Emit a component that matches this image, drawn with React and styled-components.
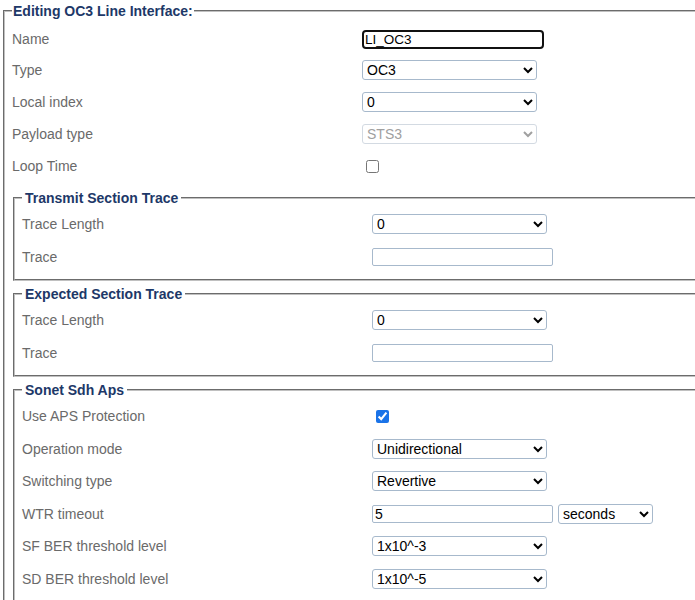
import styled, { createGlobalStyle } from "styled-components";

const GlobalStyle = createGlobalStyle`
    html, body {
        margin: 0;
        padding: 0;
        overflow: hidden;
        background: #ffffff;
    }

    body {
        font-family: "Liberation Sans", Arial, sans-serif;
        font-size: 14px;
    }
`;

export default function App() {
    return (
        <>
            <GlobalStyle />
            <Page>
                <Outer>
                    <Legend>Editing OC3 Line Interface:</Legend>
                    <Rows $bottom={8}>
                        <Row $height={30}>
                            <Label>Name</Label>
                            <NameInput defaultValue="LI_OC3" />
                        </Row>
                        <Row>
                            <Label>Type</Label>
                            <Select defaultValue="OC3">
                                <option>OC3</option>
                                <option>OC12</option>
                            </Select>
                        </Row>
                        <Row>
                            <Label>Local index</Label>
                            <Select defaultValue="0">
                                <option>0</option>
                                <option>1</option>
                            </Select>
                        </Row>
                        <Row>
                            <Label>Payload type</Label>
                            <Select defaultValue="STS3" disabled>
                                <option>STS3</option>
                            </Select>
                        </Row>
                        <Row>
                            <Label>Loop Time</Label>
                            <Check type="checkbox" />
                        </Row>
                    </Rows>

                    <Stack>
                        <Inner>
                            <Legend $inner>Transmit Section Trace</Legend>
                            <Rows>
                                <Row $height={32.5}>
                                    <Label>Trace Length</Label>
                                    <Select defaultValue="0">
                                        <option>0</option>
                                        <option>16</option>
                                        <option>64</option>
                                    </Select>
                                </Row>
                                <Row $height={32.5}>
                                    <Label>Trace</Label>
                                    <TextInput />
                                </Row>
                            </Rows>
                        </Inner>

                        <Inner>
                            <Legend $inner>Expected Section Trace</Legend>
                            <Rows>
                                <Row $height={32.5}>
                                    <Label>Trace Length</Label>
                                    <Select defaultValue="0">
                                        <option>0</option>
                                        <option>16</option>
                                        <option>64</option>
                                    </Select>
                                </Row>
                                <Row $height={32.5}>
                                    <Label>Trace</Label>
                                    <TextInput />
                                </Row>
                            </Rows>
                        </Inner>

                        <Inner>
                            <Legend $inner>Sonet Sdh Aps</Legend>
                            <Rows>
                                <Row $height={32.5}>
                                    <Label>Use APS Protection</Label>
                                    <Check type="checkbox" defaultChecked />
                                </Row>
                                <Row $height={32.5}>
                                    <Label>Operation mode</Label>
                                    <Select defaultValue="Unidirectional">
                                        <option>Unidirectional</option>
                                        <option>Bidirectional</option>
                                    </Select>
                                </Row>
                                <Row $height={32.5}>
                                    <Label>Switching type</Label>
                                    <Select defaultValue="Revertive">
                                        <option>Revertive</option>
                                        <option>Non-revertive</option>
                                    </Select>
                                </Row>
                                <Row $height={32.5}>
                                    <Label>WTR timeout</Label>
                                    <Inline>
                                        <TextInput defaultValue="5" />
                                        <Select defaultValue="seconds" $width={95}>
                                            <option>seconds</option>
                                            <option>minutes</option>
                                        </Select>
                                    </Inline>
                                </Row>
                                <Row $height={32.5}>
                                    <Label>SF BER threshold level</Label>
                                    <Select defaultValue="1x10^-3">
                                        <option>1x10^-3</option>
                                        <option>1x10^-4</option>
                                        <option>1x10^-5</option>
                                    </Select>
                                </Row>
                                <Row $height={32.5}>
                                    <Label>SD BER threshold level</Label>
                                    <Select defaultValue="1x10^-5">
                                        <option>1x10^-5</option>
                                        <option>1x10^-6</option>
                                        <option>1x10^-7</option>
                                    </Select>
                                </Row>
                            </Rows>
                        </Inner>
                    </Stack>
                </Outer>
            </Page>
        </>
    );
}

const Page = styled.div`
    width: 100%;
    height: 100vh;
    padding: 3px 0 0 3px;
    box-sizing: border-box;
    overflow: hidden;
`;

// the form is wider than the window; its right border is cut off as in the original
const Outer = styled.fieldset`
    width: 780px;
    box-sizing: border-box;
    margin: 0;
    padding: 5px 7px 10px 7px;
    border: 2px groove rgb(192, 192, 192);
    min-width: 0;
`;

const Inner = styled.fieldset`
    margin: 0 0 0 1px;
    padding: 2px 7px 6px 7px;
    border: 2px groove rgb(192, 192, 192);
    min-width: 0;
`;

const Legend = styled.legend`
    padding: 0 ${(p) => (p.$inner ? 3 : 1)}px;
    font-family: "Liberation Sans", Arial, sans-serif;
    font-size: 14px;
    font-weight: bold;
    line-height: 16px;
    color: #1d3868;
`;

const Stack = styled.div`
    display: flex;
    flex-direction: column;
    gap: 5px;
`;

const Rows = styled.div`
    display: flex;
    flex-direction: column;
    padding-bottom: ${(p) => p.$bottom || 0}px;
`;

const Row = styled.div`
    height: ${(p) => p.$height || 32}px;

    display: grid;
    grid-template-columns: 350px auto;
    align-items: center;
`;

const Label = styled.div`
    font-size: 14px;
    color: #6a6a6a;
`;

const Inline = styled.div`
    display: flex;
    align-items: center;
    gap: 5px;
`;

const Select = styled.select`
    width: ${(p) => p.$width || 175}px;
    height: 20px;
    box-sizing: border-box;

    padding: 0;
    border: 1px solid #a7b9cc;
    border-radius: 3px;

    font-family: "Liberation Sans", Arial, sans-serif;
    font-size: 14px;
    color: #000;
    background-color: #fff;

    &:disabled {
        color: #a0a0a0;
        border-color: #d3dae2;
        opacity: 1;
    }
`;

const TextInput = styled.input`
    width: 181px;
    height: 18px;
    box-sizing: border-box;

    padding: 0 2px;
    border: 1px solid #a7b9cc;
    border-radius: 2px;

    font-family: "Liberation Sans", Arial, sans-serif;
    font-size: 14px;
    color: #000;
    outline: none;
`;

const NameInput = styled.input`
    width: 182px;
    height: 19px;
    box-sizing: border-box;

    padding: 0 1px;
    border: 2px solid #111;
    border-radius: 4px;

    font-family: "Liberation Sans", Arial, sans-serif;
    font-size: 13.5px;
    line-height: 15px;
    color: #000;
    outline: none;
`;

const Check = styled.input`
    width: 13px;
    height: 13px;
    margin: 0 0 0 4px;
    accent-color: #1a73e8;
`;
